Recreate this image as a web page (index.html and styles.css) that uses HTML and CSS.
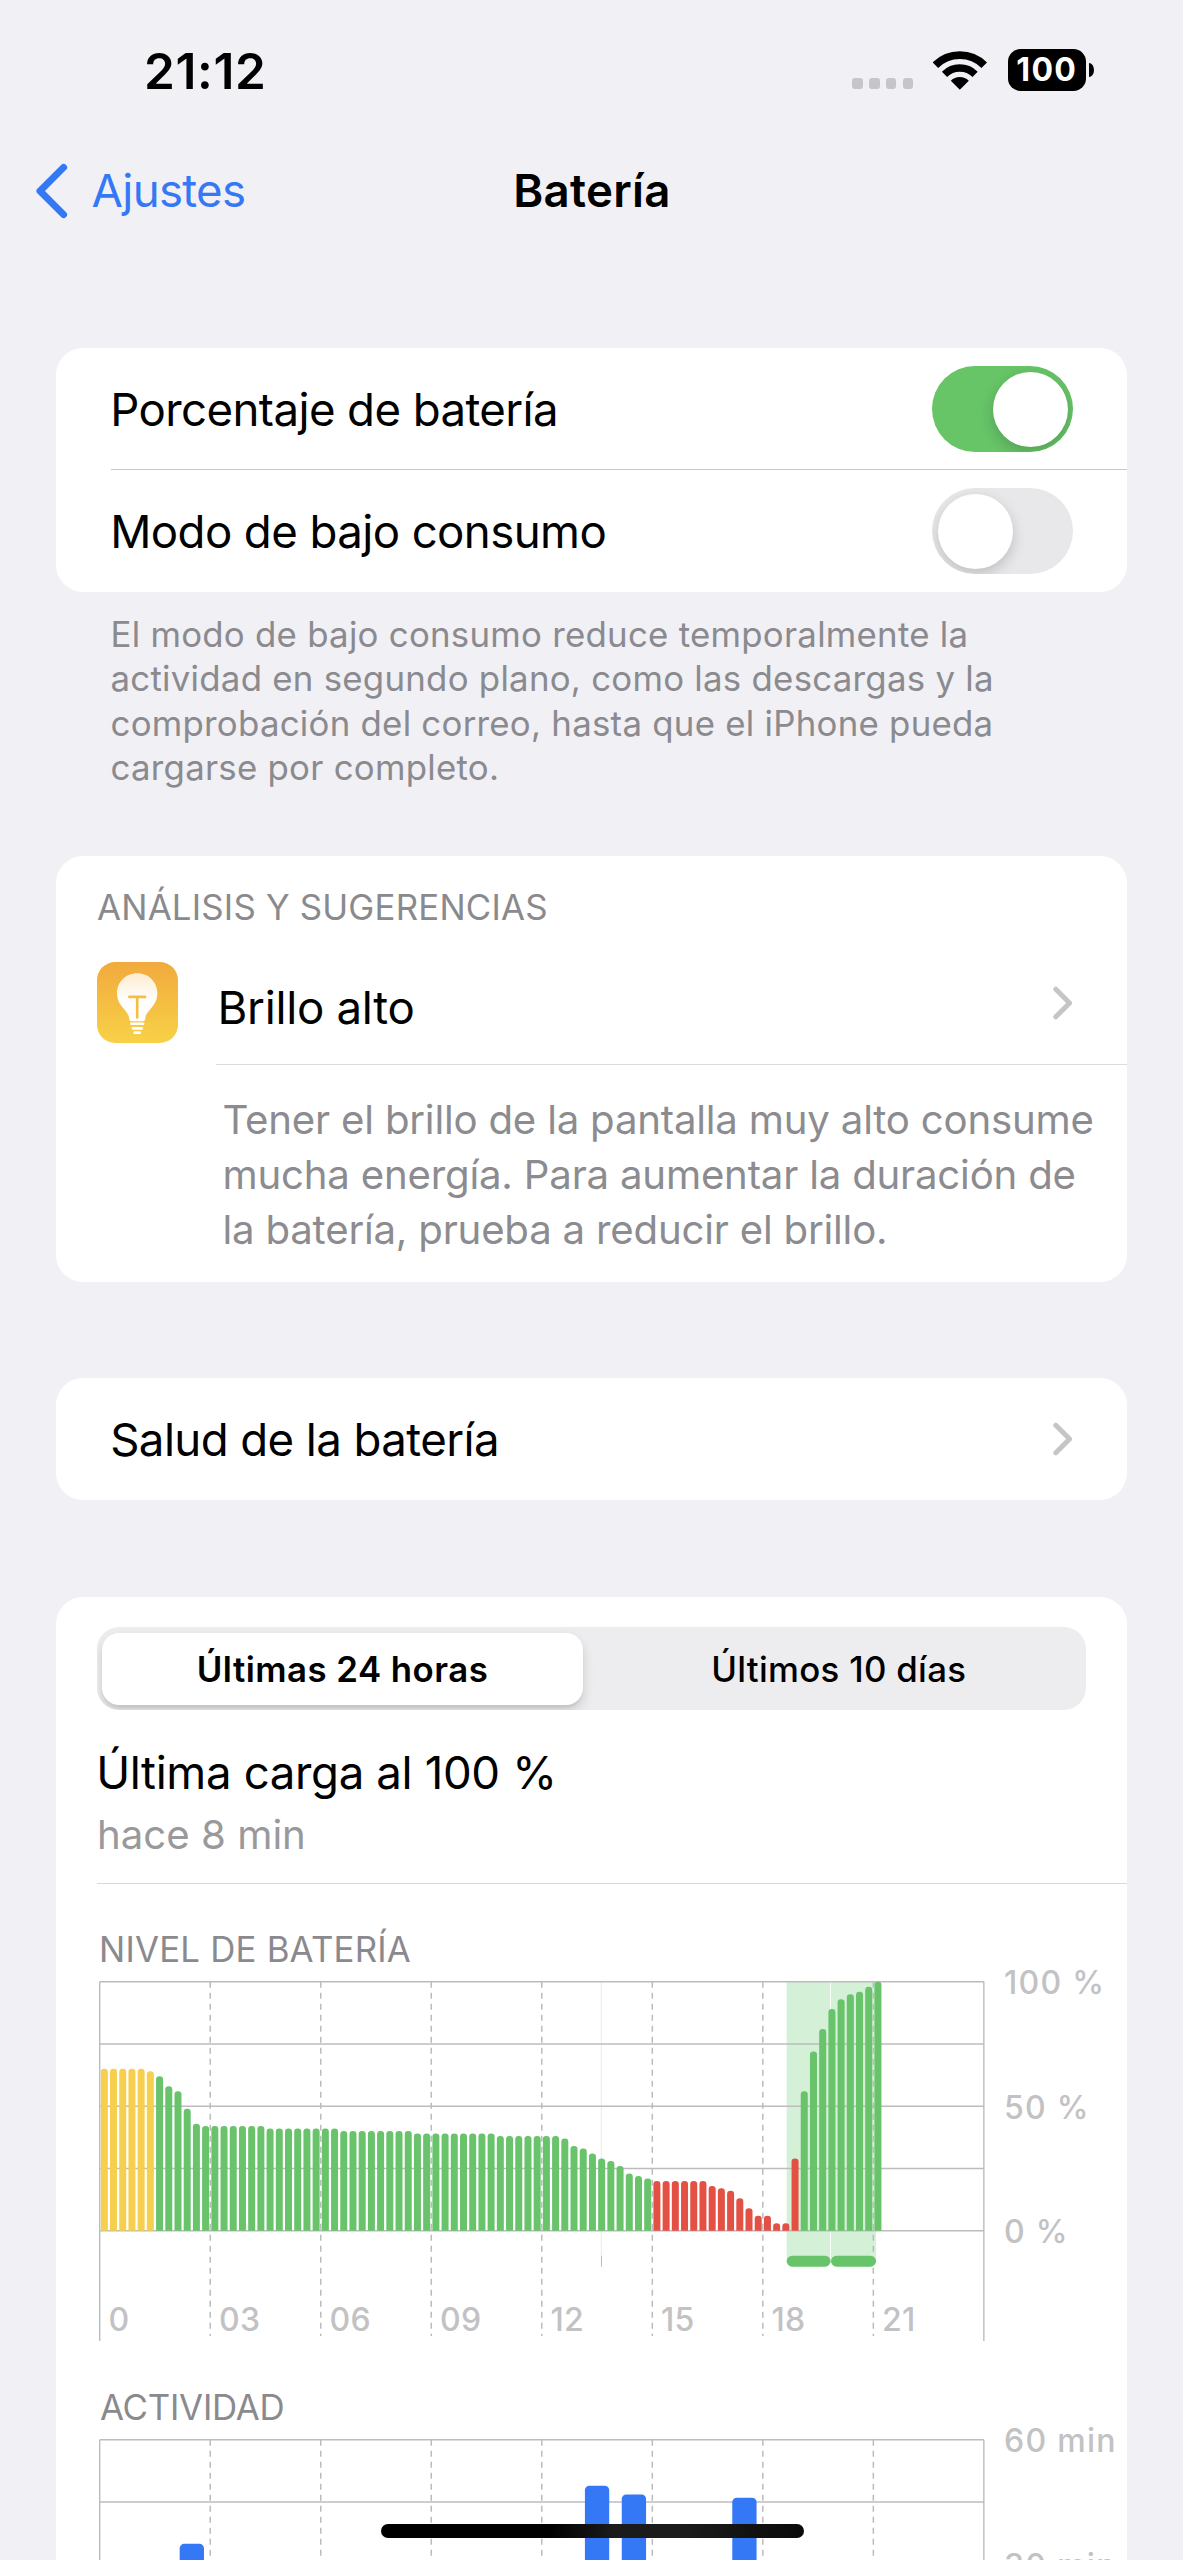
FILE: index.html
```html
<!DOCTYPE html>
<html lang="es">
<head>
<meta charset="utf-8">
<title>Batería</title>
<link rel="stylesheet" href="styles.css">
</head>
<body>
<div class="screen">
  <header class="status-bar">
    <span class="status-time">21:12</span>
    <div class="status-icons">
      <div class="signal-dots"><i></i><i></i><i></i><i></i></div>
      <svg class="wifi" width="54" height="39" viewBox="0 0 54 39" aria-hidden="true">
        <g fill="none" stroke="#000">
          <path stroke-width="7.9" d="M2.4 14.2a34.6 34.6 0 0 1 48.8 0"/>
          <path stroke-width="7.4" d="M11.5 23.3a21.7 21.7 0 0 1 30.6 0"/>
        </g>
        <path d="M26.8 38.7 17.8 29.7a12.7 12.7 0 0 1 18 0z"/>
      </svg>
      <div class="battery"><span class="battery-body">100</span><span class="battery-tip"></span></div>
    </div>
  </header>

  <nav class="nav-bar">
    <a class="back">
      <svg width="34" height="56" viewBox="0 0 34 56" aria-hidden="true"><path d="M28.6 4.4 5 28l23.6 23.6" fill="none" stroke="#3478f6" stroke-width="7" stroke-linecap="round" stroke-linejoin="round"/></svg>
      <span>Ajustes</span>
    </a>
    <h1 class="nav-title">Batería</h1>
  </nav>

  <main>
    <section class="card">
      <div class="row row-divided">
        <span class="label">Porcentaje de batería</span>
        <span class="switch switch-on"><i class="knob"></i></span>
      </div>
      <div class="row">
        <span class="label">Modo de bajo consumo</span>
        <span class="switch"><i class="knob"></i></span>
      </div>
    </section>
    <p class="footnote">El modo de bajo consumo reduce temporalmente la<br>actividad en segundo plano, como las descargas y la<br>comprobación del correo, hasta que el iPhone pueda<br>cargarse por completo.</p>

    <section class="card insights">
      <h2 class="caption">ANÁLISIS Y SUGERENCIAS</h2>
      <div class="insight">
        <svg class="insight-icon" width="81" height="81" viewBox="0 0 80 80" aria-hidden="true">
          <defs>
            <linearGradient id="tile" x1="0" y1="0" x2="0" y2="1"><stop offset="0" stop-color="#f1aa3d"/><stop offset="1" stop-color="#f8d147"/></linearGradient>
            <linearGradient id="glass" x1="0" y1="0" x2="0" y2="1"><stop offset="0" stop-color="#fcecd0"/><stop offset=".6" stop-color="#fff"/></linearGradient>
          </defs>
          <rect width="80" height="80" rx="18" fill="url(#tile)"/>
          <path fill="url(#glass)" d="M39.7 11C28.5 11 19.8 19.6 19.8 30.6c0 6.4 2.4 10.4 5.6 14.4 3.8 4.8 6 6.8 6.4 11 .1 1.6.9 2.5 2.300 2.500h11.200c1.400 0 2.200-.9 2.300-2.500.4-4.200 2.600-6.200 6.400-11 3.200-4 5.600-8 5.600-14.400C59.600 19.600 50.900 11 39.700 11z"/>
          <path d="M32 34.500h15.500M39.700 34.500v20.300" fill="none" stroke="#f5be42" stroke-width="2.600" stroke-linecap="round"/>
          <path d="M34 61h11.600M35.400 65.500h8.800M37.200 69.800h5" fill="none" stroke="#fff" stroke-width="2.600" stroke-linecap="round"/>
        </svg>
        <div class="insight-head">
          <span class="label-flush">Brillo alto</span>
          <svg class="chevron" width="20" height="34" viewBox="0 0 20 34" aria-hidden="true"><path d="M2.800 3.200 16.600 17 2.800 30.800" fill="none" stroke="#c5c5c7" stroke-width="5" stroke-linecap="round" stroke-linejoin="round"/></svg>
        </div>
      </div>
      <p class="insight-text">Tener el brillo de la pantalla muy alto consume<br>mucha energía. Para aumentar la duración de<br>la batería, prueba a reducir el brillo.</p>
    </section>

    <section class="card health">
      <div class="row">
        <span class="label">Salud de la batería</span>
        <svg class="chevron" width="20" height="34" viewBox="0 0 20 34" aria-hidden="true"><path d="M2.800 3.200 16.600 17 2.800 30.800" fill="none" stroke="#c5c5c7" stroke-width="5" stroke-linecap="round" stroke-linejoin="round"/></svg>
      </div>
    </section>

    <section class="card usage">
      <div class="segmented">
        <span class="segment segment-active">Últimas 24 horas</span>
        <span class="segment">Últimos 10 días</span>
      </div>
      <div class="last-charge">
        <p class="charge-title">Última carga al 100 %</p>
        <p class="charge-time">hace 8 min</p>
      </div>
      <h2 class="caption level-caption">NIVEL DE BATERÍA</h2>
      <svg class="chart" id="level" width="1030" height="414" viewBox="0 0 1030 414"></svg>
      <h2 class="caption activity-caption">ACTIVIDAD</h2>
      <svg class="chart" id="activity" width="1030" height="380" viewBox="0 0 1030 380"></svg>
    </section>
  </main>
  <div class="home-indicator"></div>
</div>
<script src="charts.js"></script>
</body>
</html>
```
FILE: styles.css
```css
* { box-sizing: border-box; margin: 0; padding: 0; }

body {
  background: #f1f0f5;
  color: #000;
  font-family: Inter, "Liberation Sans", sans-serif;
  font-size: 45.6px;
}

h1, h2 { font: inherit; }

svg { display: block; flex: none; }

.screen {
  position: relative;
  width: 1183px;
  height: 2560px;
  overflow: hidden;
}

/* Status bar */
.status-bar {
  display: flex;
  justify-content: space-between;
  align-items: center;
  height: 140px;
  padding: 0 89.5px 0 144px;
}

.status-time {
  padding-top: 2px;
  font-size: 49.5px;
  font-weight: 600;
  letter-spacing: .0127em;
}

.status-icons { display: flex; align-items: center; }

.signal-dots { display: flex; gap: 6.2px; margin: 27px 20px 0 0; }

.signal-dots i {
  width: 10.5px;
  height: 10.5px;
  border-radius: 3px;
  background: #c5c5ca;
}

.wifi { margin-right: 20.5px; }

.battery { display: flex; align-items: center; gap: 2.5px; }

.battery-body {
  width: 78.5px;
  height: 42px;
  border-radius: 12.5px;
  background: #000;
  color: #fff;
  font-size: 32px;
  font-weight: 700;
  line-height: 41px;
  letter-spacing: .04em;
  text-align: center;
}

.battery-tip {
  width: 5px;
  height: 14px;
  border-radius: 0 5px 5px 0 / 0 7px 7px 0;
  background: #000;
}

/* Navigation */
.nav-bar {
  display: grid;
  grid-template-columns: 1fr auto 1fr;
  align-items: center;
  height: 101px;
  margin-bottom: 107.3px;
  padding: 0 35px;
}

.back {
  display: flex;
  align-items: center;
  gap: 22.5px;
  color: #3478f6;
  letter-spacing: -.0149em;
}

.nav-title { padding-left: 1px; font-weight: 600; letter-spacing: .0061em; }

/* Cards */
.card {
  margin: 0 56px;
  border-radius: 27px;
  background: #fff;
  overflow: hidden;
}

.row {
  display: flex;
  align-items: center;
  justify-content: space-between;
  height: 121.7px;
  margin-left: 55px;
  padding-right: 54px;
}

.row-divided { border-bottom: 1px solid #c8c8ca; }

.label { margin-left: -.8px; padding-top: 2px; letter-spacing: -.0129em; }

.switch {
  display: flex;
  width: 141px;
  height: 86px;
  margin-top: 1px;
  padding: 5.5px;
  border-radius: 43px;
  background: #e8e8ea;
  overflow: hidden;
}

.knob {
  width: 75px;
  height: 75px;
  border-radius: 50%;
  background: #fff;
  box-shadow: 0 5px 14px rgba(0, 0, 0, .18);
}

.switch-on { justify-content: flex-end; background: #67c467; }

.footnote {
  margin: 20.5px 0 66.6px 110.5px;
  color: #8a8a8f;
  font-size: 34.8px;
  line-height: 44.2px;
  letter-spacing: .0075em;
}

.caption {
  color: #8a8a8e;
  font-size: 34.8px;
  line-height: 44px;
  letter-spacing: .006em;
}

/* Insights */
.insights { padding: 29px 0 25px 41px; }

.insight { display: flex; align-items: flex-end; height: 136.5px; }

.insight-icon { margin: 0 38px 22px 0; }

.insight-head {
  flex: 1;
  display: flex;
  align-items: center;
  justify-content: space-between;
  height: 123.5px;
  padding-right: 54px;
  border-bottom: 1.5px solid #dcdcde;
}

.label-flush { padding: 9px 0 0 1.5px; letter-spacing: -.0061em; }

.insight-text {
  margin: 26.5px 0 0 125.5px;
  color: #8c8c90;
  font-size: 40.2px;
  line-height: 55px;
  letter-spacing: -.0052em;
  white-space: nowrap;
}

.health { margin-top: 96.5px; }

/* Usage */
.usage { margin-top: 97.4px; padding: 30px 0 0 41px; }

.segmented {
  display: flex;
  width: 989px;
  height: 83px;
  border-radius: 22px;
  background: #ededef;
  overflow: hidden;
}

.segment {
  flex: 1;
  font-size: 34.8px;
  font-weight: 500;
  line-height: 84px;
  letter-spacing: .0086em;
  text-align: center;
}

.segment-active {
  flex: 0 0 481px;
  margin: 5.5px 8.5px 5.5px 5px;
  border-radius: 17px;
  background: #fff;
  box-shadow: 0 6px 12px rgba(0, 0, 0, .14), 0 3px 2px rgba(0, 0, 0, .05);
  font-weight: 600;
  line-height: 73px;
  letter-spacing: .0137em;
}

.last-charge { padding: 33px 0 23px; border-bottom: 1.5px solid #d8d8da; }

.charge-title {
  margin-left: -.8px;
  line-height: 60px;
  letter-spacing: -.0079em;
}

.charge-time {
  margin-top: 6.5px;
  color: #99999b;
  font-size: 40.2px;
  line-height: 50px;
}

.level-caption { margin: 43px 0 0 2px; }

.activity-caption { margin-left: 3px; letter-spacing: -.0066em; }

/* Charts */
.chart { overflow: visible; }

.grid { stroke: #bcbcbe; stroke-width: 1.4px; fill: none; }

.grid-dash { stroke: #bcbcbe; stroke-width: 1.5px; stroke-dasharray: 6 5; }

.axis {
  fill: #c2c2c4;
  font-size: 32px;
  font-weight: 500;
  letter-spacing: .01em;
}

.axis-y { letter-spacing: .04em; }

.bar-yellow { fill: #f6cf4f; }
.bar-green { fill: #68c36a; }
.bar-red { fill: #e35144; }
.bar-blue { fill: #3478f6; }
.charging { fill: #d4f0d6; }
.charging-pill { fill: #67c46a; }
.charging-blip { fill: #e6f3e7; }

.home-indicator {
  position: absolute;
  left: 381px;
  bottom: 22px;
  width: 422.5px;
  height: 14px;
  border-radius: 7px;
  background: linear-gradient(90deg, #000 40%, #1b1b1b 55%, #1b1b1b 72%, #0a0a0a);
}
```
FILE: charts.js
```js
const NS = 'http://www.w3.org/2000/svg';
const LEFT = 2.7, TOP = 10.7, STEP = 110.52, HEIGHT = 249;
const RIGHT = LEFT + STEP * 8;

function add(svg, tag, attrs, text) {
  const el = document.createElementNS(NS, tag);
  for (const key in attrs) el.setAttribute(key, attrs[key]);
  if (text !== undefined) el.textContent = text;
  svg.appendChild(el);
}

function line(svg, cls, x1, y1, x2, y2) {
  add(svg, 'line', { class: cls, x1, y1, x2, y2 });
}

function drawGrid(svg, bottom, yLabels) {
  for (let i = 0; i <= 4; i++) {
    const y = TOP + (HEIGHT / 4) * i;
    line(svg, 'grid', LEFT, y, RIGHT, y);
  }
  line(svg, 'grid', LEFT, TOP, LEFT, bottom);
  line(svg, 'grid', RIGHT, TOP, RIGHT, bottom);
  for (let i = 1; i < 8; i++) {
    line(svg, 'grid-dash', LEFT + STEP * i, TOP, LEFT + STEP * i, bottom - 5);
  }
  yLabels.forEach((label, i) => {
    add(svg, 'text', { class: 'axis axis-y', x: 907, y: TOP + 12.3 + (HEIGHT / 2) * i }, label);
  });
}

/* Bar with a rounded top and a square foot. */
function bar(svg, cls, x, width, top, bottom, r) {
  const d = `M${x} ${bottom}V${top + r}a${r} ${r} 0 0 1 ${r} ${-r}h${width - 2 * r}a${r} ${r} 0 0 1 ${r} ${r}V${bottom}z`;
  add(svg, 'path', { class: cls, d });
}

/* Battery percentage, one value per quarter of an hour. */
const levels = [
  65, 65, 65, 65, 65, 64, 62, 58, 56, 49, 43, 42,
  42, 42, 42, 42, 42, 42, 41, 41, 41, 41, 41, 41,
  41, 41, 40, 40, 40, 40, 40, 40, 40, 40, 39, 39,
  39, 39, 39, 39, 39, 39, 39, 38, 38, 38, 38, 38,
  38, 38, 37, 34, 33, 31, 29, 28, 26, 23, 22, 21,
  20, 20, 20, 20, 20, 20, 18, 17, 16, 13, 9, 6,
  6, 3, 3, 29, 56, 72, 81, 89, 93, 95, 96, 98, 100
];
const barColor = i => (i < 6 ? 'bar-yellow' : i >= 60 && i < 76 ? 'bar-red' : 'bar-green');

const level = document.getElementById('level');
add(level, 'rect', { class: 'charging', x: 689.7, y: TOP, width: 43.4, height: 280 });
add(level, 'rect', { class: 'charging', x: 733.9, y: TOP, width: 45, height: 280 });
add(level, 'rect', { class: 'charging-blip', x: 503.8, y: TOP, width: 1.2, height: 285 });
drawGrid(level, 370, ['100 %', '50 %', '0 %']);
const base = TOP + HEIGHT;
levels.forEach((value, i) => {
  const x = LEFT + (STEP / 12) * (i + 0.5) - 3.5;
  bar(level, barColor(i), x, 7, base - (HEIGHT * value) / 100, base, 3.3);
});
add(level, 'rect', { class: 'charging-pill', x: 689.7, y: base + 25, width: 43.9, height: 11, rx: 5.5 });
add(level, 'rect', { class: 'charging-pill', x: 734, y: base + 25, width: 45, height: 11, rx: 5.5 });
add(level, 'rect', { class: 'charging-pill', x: 504, y: base + 25, width: 1, height: 11, opacity: 0.6 });
['0', '03', '06', '09', '12', '15', '18', '21'].forEach((hour, i) => {
  add(level, 'text', { class: 'axis', x: LEFT + STEP * i + 8.7, y: 360.4 }, hour);
});

/* Screen activity in minutes, one bar per hour. */
const activity = document.getElementById('activity');
drawGrid(activity, 370, ['60 min', '30 min']);
[[2, 34.9], [13, 48.9], [14, 46.8], [17, 46]].forEach(([hour, minutes]) => {
  const x = LEFT + (STEP / 3) * hour + 6.3;
  bar(activity, 'bar-blue', x, 24.3, base - (HEIGHT * minutes) / 60, base, 4.5);
});
```
